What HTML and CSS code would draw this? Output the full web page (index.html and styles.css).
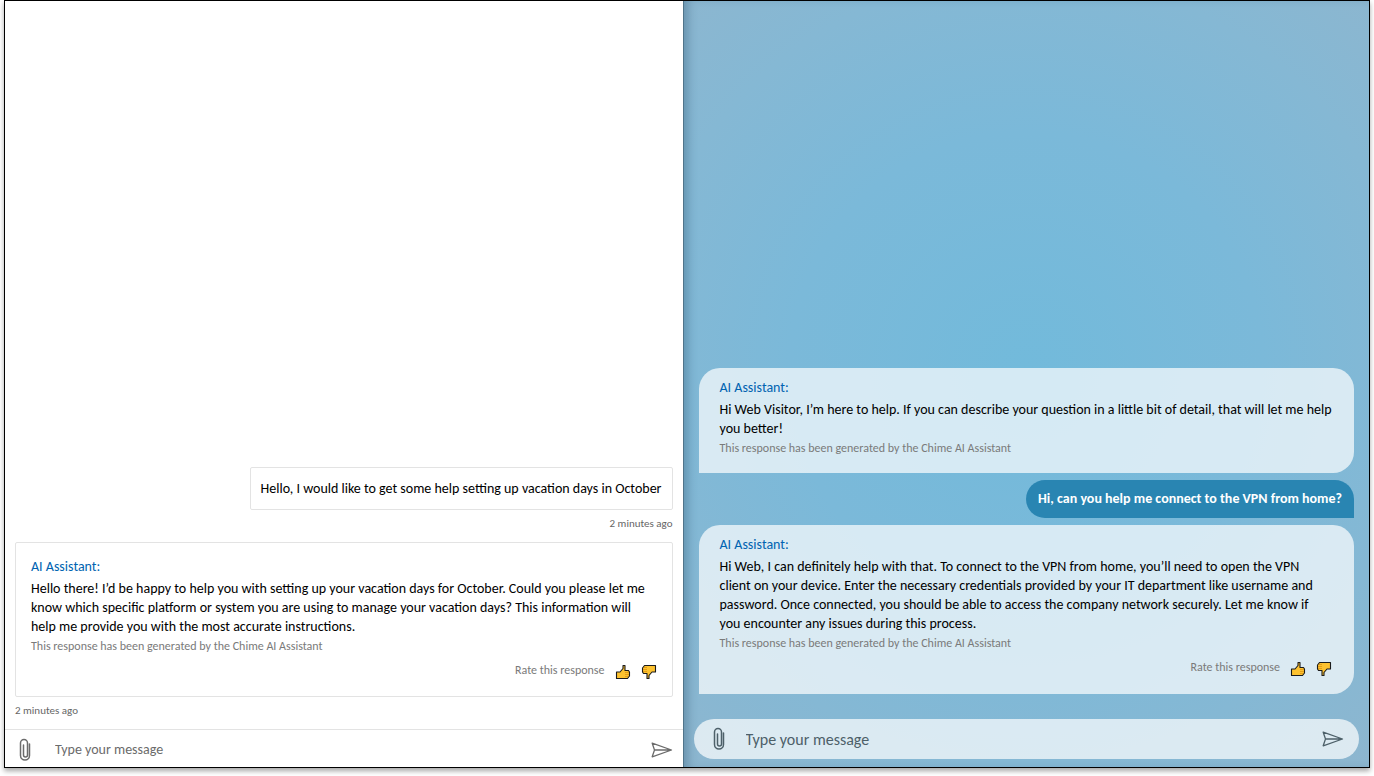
FILE: index.html
```html
<!DOCTYPE html>
<html lang="en">
<head>
    <meta charset="UTF-8">
    <meta name="viewport" content="width=device-width, initial-scale=1.0">
    <title>Chime AI Assistant</title>
    <link rel="stylesheet" href="styles.css">
</head>
<body>
    <!-- Shared icons -->
    <svg class="icon-defs" aria-hidden="true">
        <symbol id="icon-clip" viewBox="0 0 12 24">
            <path d="M10.500 6v11.500a4.500 4.500 0 0 1-9 0V5a3.500 3.500 0 0 1 7 0v12a2 2 0 0 1-4 0V7" fill="none" stroke="currentColor" stroke-width="1.500" stroke-linecap="round"/>
        </symbol>
        <symbol id="icon-send" viewBox="0 0 22 16">
            <path d="M1.200 1.200L20.500 8L1.200 14.800L3.500 8zM3.500 8H20" fill="none" stroke="currentColor" stroke-width="1.300" stroke-linejoin="round"/>
        </symbol>
        <symbol id="icon-thumb" viewBox="0 0 16 16">
            <path d="M1.500 8H5L8 4.500V1.500H10V6.500H13.500L14.500 8V12L12.500 14.500H1.500z" fill="#fdc22f" stroke="#1b1b1b" stroke-width="1.100" stroke-linejoin="round"/>
            <path d="M10 8.500h4M10 10.500h4M10 12.500h3" fill="none" stroke="#d98e10" stroke-width="0.700"/>
        </symbol>
    </svg>

    <main class="frame">
        <!-- Classic theme -->
        <section class="chat chat-light">
            <div class="messages">
                <div class="bubble visitor">Hello, I would like to get some help setting up vacation days in October</div>
                <time class="timestamp sent">2 minutes ago</time>
                <article class="bubble assistant">
                    <h2 class="author">AI Assistant:</h2>
                    <p class="text">Hello there! I’d be happy to help you with setting up your vacation days for October. Could you please let me know which specific platform or system you are using to manage your vacation days? This information will help me provide you with the most accurate instructions.</p>
                    <p class="note">This response has been generated by the Chime AI Assistant</p>
                    <div class="rating">
                        <span>Rate this response</span>
                        <button type="button" aria-label="Good response"><svg><use href="#icon-thumb"/></svg></button>
                        <button type="button" class="down" aria-label="Bad response"><svg><use href="#icon-thumb"/></svg></button>
                    </div>
                </article>
                <time class="timestamp">2 minutes ago</time>
            </div>
            <form class="composer">
                <button type="button" class="attach" aria-label="Attach file"><svg><use href="#icon-clip"/></svg></button>
                <input type="text" placeholder="Type your message" aria-label="Type your message">
                <button type="submit" class="send" aria-label="Send"><svg><use href="#icon-send"/></svg></button>
            </form>
        </section>

        <!-- Rounded theme -->
        <section class="chat chat-blue">
            <div class="messages">
                <article class="bubble assistant">
                    <h2 class="author">AI Assistant:</h2>
                    <p class="text">Hi Web Visitor, I’m here to help. If you can describe your question in a little bit of detail, that will let me help you better!</p>
                    <p class="note">This response has been generated by the Chime AI Assistant</p>
                </article>
                <div class="bubble visitor">Hi, can you help me connect to the VPN from home?</div>
                <article class="bubble assistant">
                    <h2 class="author">AI Assistant:</h2>
                    <p class="text">Hi Web, I can definitely help with that. To connect to the VPN from home, you’ll need to open the VPN client on your device. Enter the necessary credentials provided by your IT department like username and password. Once connected, you should be able to access the company network securely. Let me know if you encounter any issues during this process.</p>
                    <p class="note">This response has been generated by the Chime AI Assistant</p>
                    <div class="rating">
                        <span>Rate this response</span>
                        <button type="button" aria-label="Good response"><svg><use href="#icon-thumb"/></svg></button>
                        <button type="button" class="down" aria-label="Bad response"><svg><use href="#icon-thumb"/></svg></button>
                    </div>
                </article>
            </div>
            <form class="composer">
                <button type="button" class="attach" aria-label="Attach file"><svg><use href="#icon-clip"/></svg></button>
                <input type="text" placeholder="Type your message" aria-label="Type your message">
                <button type="submit" class="send" aria-label="Send"><svg><use href="#icon-send"/></svg></button>
            </form>
        </section>
    </main>
</body>
</html>
```
FILE: styles.css
```css
* {
    margin: 0;
    padding: 0;
    box-sizing: border-box;
}

body {
    height: 100vh;
    padding: 0 4px 8px;
    background: #fff;
    font-family: Carlito, Calibri, Lato, sans-serif;
    font-size: 14px;
    line-height: 19px;
    color: #000;
}

button {
    display: flex;
    border: 0;
    background: none;
    color: inherit;
    cursor: pointer;
}

.icon-defs {
    display: none;
}

.frame {
    display: flex;
    height: 100%;
    border: 1px solid #000;
    box-shadow: 0 3px 5px rgba(0, 0, 0, 0.35);
}

/* Chat panes */
.chat {
    display: flex;
    flex-direction: column;
    min-width: 0;
}

.chat-light {
    flex: 678;
    background: #fff;
}

.chat-blue {
    flex: 686;
    border-left: 1px solid #50748a;
    background: radial-gradient(circle at 50% 48%, #72badb 0%, #7bb9d9 45%, #85b8d4 75%, #8db6cf 100%);
    box-shadow: inset 8px 0 10px -4px rgba(40, 80, 110, 0.35);
}

.messages {
    flex: 1;
    display: flex;
    flex-direction: column;
    justify-content: flex-end;
    align-items: flex-start;
}

.assistant {
    width: 100%;
}

.visitor {
    align-self: flex-end;
}

.author {
    margin-bottom: 3px;
    font-size: 14px;
    font-weight: 400;
    color: #0063b1;
}

.note,
.rating {
    font-size: 12px;
    color: #7a7a7a;
}

.note {
    margin-top: 1px;
}

.rating {
    display: flex;
    justify-content: flex-end;
    align-items: center;
    gap: 10px;
    margin-top: 5px;
    padding-bottom: 2px;
}

.rating button {
    padding-top: 3px;
}

.rating svg {
    width: 16px;
    height: 16px;
}

.rating .down svg {
    transform: rotate(180deg);
}

.timestamp {
    font-size: 11px;
    color: #666;
}

.sent {
    align-self: flex-end;
}

/* Composer */
.composer {
    display: flex;
    align-items: center;
}

.composer input {
    flex: 1;
    min-width: 0;
    border: 0;
    outline: none;
    background: none;
    font-family: inherit;
    color: inherit;
}

.composer input::placeholder {
    color: inherit;
    opacity: 1;
}

.attach svg {
    width: 12px;
    height: 24px;
}

.send svg {
    width: 22px;
    height: 16px;
}

/* Classic theme */
.chat-light .messages {
    padding: 10px 10px 9px;
}

.chat-light .bubble {
    border: 1px solid #e3e3e3;
    border-radius: 2px;
}

.chat-light .visitor {
    padding: 11px 10px;
}

.chat-light .assistant {
    padding: 14px 15px;
}

.chat-light .timestamp {
    margin-top: 4px;
}

.chat-light .sent {
    margin-bottom: 9px;
}

.chat-light .composer {
    height: 38px;
    padding: 2px 10px 0 14px;
    border-top: 1px solid #e3e3e3;
    gap: 24px;
    color: #6b6b6b;
}

.chat-light .composer input {
    font-size: 14px;
}

/* Rounded theme */
.chat-blue .messages {
    padding: 15px 15px 25px;
    gap: 7px;
}

.chat-blue .assistant {
    padding: 10px 22px 15px 21px;
    border-radius: 21px 21px 21px 0;
    background: rgba(255, 255, 255, 0.7);
}

.chat-blue .visitor {
    padding: 9px 12px 10px;
    border-radius: 20px 20px 0 20px;
    background: #2985b2;
    color: #fff;
    font-weight: 700;
}

.chat-blue .composer {
    height: 40px;
    margin: 0 10px 8px;
    padding: 0 15px 0 19px;
    border-radius: 20px;
    background: rgba(255, 255, 255, 0.7);
    gap: 21px;
    color: #4d6069;
}

.chat-blue .composer input {
    font-size: 16px;
}
```
